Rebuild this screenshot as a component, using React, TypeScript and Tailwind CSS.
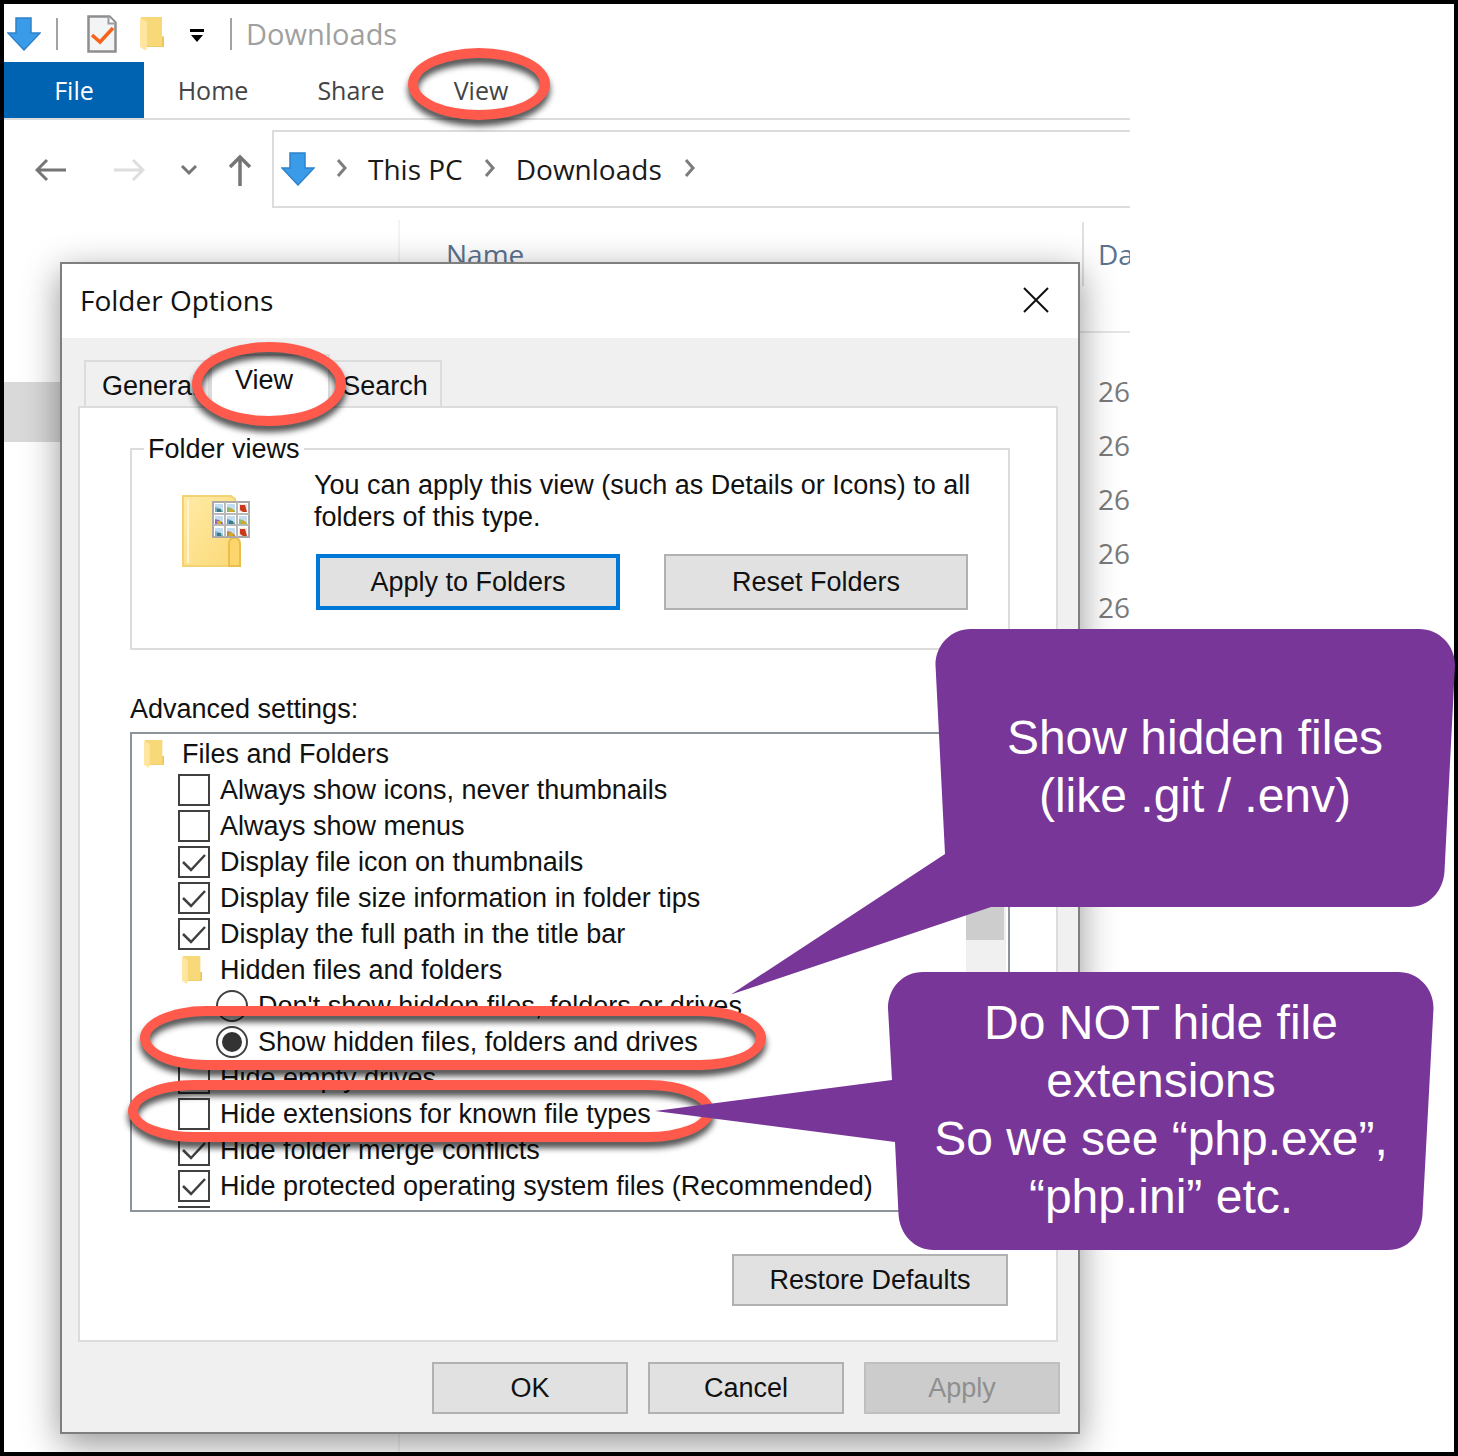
import React from "react";

const UI = "font-['Open_Sans','Noto_Sans',sans-serif]";
const DIALOG = "font-['Liberation_Sans',Arial,sans-serif]";

function DownArrow() {
  return (
    <svg width="34" height="34" viewBox="0 0 34 34" aria-hidden="true">
      <path d="M9 1h15v15h9L17 33 1 16h8z" fill="#3a9be9" stroke="#2f83c9" strokeWidth="1.5" />
    </svg>
  );
}

function FolderIcon({ className }: { className: string }) {
  return (
    <svg className={className} viewBox="0 0 24 35" preserveAspectRatio="none" aria-hidden="true">
      <path d="M1 0h21v20h2v11H3z" fill="#f7d97a" />
      <path d="M22 20h2v11H6v-1h16z" fill="#ecc85c" />
      <path d="M0 1l7 4v24l-1 6-6-4z" fill="#ffe6a0" />
    </svg>
  );
}

function PageCheckIcon() {
  return (
    <svg width="30" height="38" viewBox="0 0 30 38" aria-hidden="true">
      <path d="M1.500 1.500h21l6 6v29h-27z" fill="#f3f4f6" stroke="#8e8e8e" strokeWidth="2.500" />
      <path d="M21.500 1.500v7h7" fill="#fff" stroke="#9a9a9a" strokeWidth="2" />
      <path d="M5 20l8 7L26 13" fill="none" stroke="#f7631b" strokeWidth="3.500" />
    </svg>
  );
}

function Chevron() {
  return (
    <svg width="12" height="20" viewBox="0 0 12 20" aria-hidden="true" className="shrink-0">
      <path d="M2 1l7 8-7 8" fill="none" stroke="#7d7d7d" strokeWidth="3" />
    </svg>
  );
}

function FolderViewsIcon() {
  const tiles = ["#6fa8cf", "#86b86a", "#c9391d", "#8e6bb0", "#5f9fd0", "#8abf6d", "#7ab4dc", "#b98a3c", "#c9391d"];
  return (
    <svg width="70" height="74" viewBox="0 0 70 74" aria-hidden="true">
      <defs>
        <linearGradient id="fv" x1="0" y1="0" x2="1" y2="1">
          <stop offset="0" stopColor="#ffeaa6" />
          <stop offset="1" stopColor="#fbd977" />
        </linearGradient>
      </defs>
      <path d="M1 2h48l4 3v67H1z" fill="url(#fv)" stroke="#f3d273" strokeWidth="2" />
      <path d="M6 6v63" stroke="#fff3cd" strokeWidth="2" />
      <path d="M47 72V50q0-6 5.500-6t5.500 6v22z" fill="#fdd56d" stroke="#e8bf4c" strokeWidth="2" />
      <rect x="31" y="8" width="36" height="35" fill="#fff" stroke="#a9a9a9" strokeWidth="2" />
      <path d="M43 8v35M55 8v35M31 20h36M31 31h36" stroke="#b9b9b9" strokeWidth="2" />
      {tiles.map((c, i) => {
        const x = 33 + (i % 3) * 12;
        const y = 10 + Math.floor(i / 3) * 12;
        const red = c === "#c9391d";
        return (
          <g key={i}>
            <rect x={x} y={y} width="8" height="8" fill={red ? "#f3e4de" : "#c4dcf0"} />
            <path d={red ? `M${x + 1} ${y + 1}h5l2 7h-4l-3-2z` : `M${x} ${y + 3}l4 1 4 3v1h-8z`} fill={c} />
            {!red && <rect x={x + 2} y={y + 5} width="4" height="3" fill={i % 2 ? "#d9a62c" : "#3d7c74"} />}
          </g>
        );
      })}
    </svg>
  );
}

function Ring({ className }: { className: string }) {
  return (
    <span
      aria-hidden="true"
      className={`pointer-events-none absolute z-10 border-[10px] border-[#ff5a4b] drop-shadow-[0_6px_3px_rgba(0,0,0,0.7)] ${className}`}
    />
  );
}

type Item = { kind: "folder" | "check" | "radio"; level: 0 | 1 | 2; label: string; on?: boolean };

const items: Item[] = [
  { kind: "folder", level: 0, label: "Files and Folders" },
  { kind: "check", level: 1, label: "Always show icons, never thumbnails" },
  { kind: "check", level: 1, label: "Always show menus" },
  { kind: "check", level: 1, label: "Display file icon on thumbnails", on: true },
  { kind: "check", level: 1, label: "Display file size information in folder tips", on: true },
  { kind: "check", level: 1, label: "Display the full path in the title bar", on: true },
  { kind: "folder", level: 1, label: "Hidden files and folders" },
  { kind: "radio", level: 2, label: "Don't show hidden files, folders or drives" },
  { kind: "radio", level: 2, label: "Show hidden files, folders and drives", on: true },
  { kind: "check", level: 1, label: "Hide empty drives" },
  { kind: "check", level: 1, label: "Hide extensions for known file types" },
  { kind: "check", level: 1, label: "Hide folder merge conflicts", on: true },
  { kind: "check", level: 1, label: "Hide protected operating system files (Recommended)", on: true },
  { kind: "check", level: 1, label: "" },
];

const indent = ["pl-2", "pl-[46px]", "pl-[84px]"];

function SettingRow({ item }: { item: Item }) {
  const pad = indent[item.level];
  if (item.kind === "folder") {
    return (
      <div className={`flex h-9 shrink-0 items-center ${pad}`}>
        <span className="flex w-[42px] pl-1">
          <FolderIcon className="h-7 w-5" />
        </span>
        <span>{item.label}</span>
      </div>
    );
  }
  return (
    <label className={`flex h-9 shrink-0 items-center gap-[10px] ${pad}`}>
      <span className="relative flex size-8 shrink-0">
        {item.kind === "check" ? (
          <>
            <input
              type="checkbox"
              defaultChecked={item.on}
              aria-label={item.label || "More settings"}
              className="peer size-8 appearance-none border-2 border-[#404040] bg-white"
            />
            <svg className="pointer-events-none absolute inset-0 hidden peer-checked:block" viewBox="0 0 32 32" aria-hidden="true">
              <path d="M5 16l8 8L27 9" fill="none" stroke="#404040" strokeWidth="2.500" />
            </svg>
          </>
        ) : (
          <>
            <input
              type="radio"
              name="hidden-files"
              defaultChecked={item.on}
              className="peer size-8 appearance-none rounded-full border-2 border-[#404040] bg-white"
            />
            <span className="pointer-events-none absolute inset-[6px] hidden rounded-full bg-[#333] peer-checked:block" />
          </>
        )}
      </span>
      <span>{item.label}</span>
    </label>
  );
}

function PushButton({ children, className }: { children: React.ReactNode; className: string }) {
  return (
    <button type="button" className={`border-2 border-[#b1b1b1] bg-[#e1e1e1] ${className}`}>
      {children}
    </button>
  );
}

function Explorer() {
  return (
    <section className={`mr-[324px] flex flex-col overflow-hidden [grid-area:1/1] ${UI}`}>
      <header className="flex h-[58px] items-center pt-[2px]">
        <span className="ml-[3px] flex w-[49px]"><DownArrow /></span>
        <span className="h-8 w-[2px] bg-[#a3a3a3]" />
        <span className="ml-[29px] flex w-[53px]"><PageCheckIcon /></span>
        <FolderIcon className="h-[34px] w-6" />
        <svg width="16" height="14" viewBox="0 0 16 14" aria-hidden="true" className="mt-1 ml-[25px]">
          <path d="M1 0h14v3H1zM2 6h12l-6 7z" fill="#000" />
        </svg>
        <span className="ml-[25px] h-8 w-[2px] bg-[#a3a3a3]" />
        <h1 className="ml-[14px] text-[29px] leading-9 text-[#a0a0a0]">Downloads</h1>
      </header>
      <nav className="flex h-[58px] border-b-2 border-[#dcdcdc] text-[25px] leading-9 text-[#444]">
        <button type="button" className="w-[140px] bg-[#0063b1] text-white">File</button>
        <button type="button" className="w-[138px]">Home</button>
        <button type="button" className="w-[138px]">Share</button>
        <button type="button" className="relative w-[122px]">
          View
          <Ring className="-top-[14px] -left-3 h-[72px] w-[142px] rounded-[50%]" />
        </button>
      </nav>
      <div className="mt-[10px] flex h-[78px] items-center text-[28px] leading-9 text-[#1a1a1a]">
        <div className="flex w-[268px] shrink-0 items-center pt-[2px]">
          <button type="button" aria-label="Back" className="ml-[31px]">
            <svg width="32" height="24" viewBox="0 0 32 24"><path d="M31 12H3M12 2L2 12l10 10" fill="none" stroke="#757575" strokeWidth="3" /></svg>
          </button>
          <button type="button" aria-label="Forward" className="ml-[46px]">
            <svg width="32" height="24" viewBox="0 0 32 24"><path d="M1 12h28M20 2l10 10-10 10" fill="none" stroke="#dedede" strokeWidth="3" /></svg>
          </button>
          <button type="button" aria-label="Recent locations" className="ml-[35px]">
            <svg width="18" height="12" viewBox="0 0 18 12"><path d="M2 2l7 7 7-7" fill="none" stroke="#757575" strokeWidth="3" /></svg>
          </button>
          <button type="button" aria-label="Up" className="ml-[30px]">
            <svg width="24" height="32" viewBox="0 0 24 32"><path d="M12 32V3M2 13L12 3l10 10" fill="none" stroke="#757575" strokeWidth="3.500" /></svg>
          </button>
        </div>
        <div className="flex h-full flex-1 items-center border-y-2 border-l-2 border-[#dcdcdc] pl-[7px]">
          <DownArrow />
          <span className="ml-[21px] flex"><Chevron /></span>
          <a href="#this-pc" className="ml-5">This PC</a>
          <span className="ml-[21px] flex"><Chevron /></span>
          <a href="#downloads" className="ml-5">Downloads</a>
          <span className="ml-[22px] flex"><Chevron /></span>
        </div>
      </div>
      <div className="flex flex-1 leading-9">
        <div className="mt-3 w-[396px] shrink-0 border-r-2 border-[#f3f3f3] pt-[162px]">
          <div className="h-[60px] bg-[#d9d9d9]" />
        </div>
        <table className="w-full table-fixed self-start border-collapse text-left text-[28px]">
          <thead>
            <tr className="h-[124px] border-b-2 border-[#e5e5e5] align-top text-[#5b7290]">
              <th className="pt-[14px] font-normal">
                <div className="flex h-16 items-center border-r-2 border-[#e0e0e0] pl-[46px]">Name</div>
              </th>
              <th className="w-[46px] overflow-hidden pt-[14px] font-normal">
                <div className="flex h-16 items-center pl-[14px]">Da</div>
              </th>
            </tr>
          </thead>
          <tbody className="text-[#7a7a7a]">
            <tr className="h-8" aria-hidden="true" />
            {[0, 1, 2, 3, 4].map((n) => (
              <tr key={n} className="h-[54px]">
                <td />
                <td className="pl-[14px]">26</td>
              </tr>
            ))}
          </tbody>
        </table>
      </div>
    </section>
  );
}

function FolderOptions() {
  return (
    <section
      role="dialog"
      aria-labelledby="dialog-title"
      className={`relative mt-[258px] mr-[374px] mb-[18px] ml-14 flex flex-col border-2 border-[#7f7f7f] bg-[#f0f0f0] text-[27px] leading-8 text-[#111] shadow-[0_10px_34px_rgba(0,0,0,0.42)] [grid-area:1/1] ${DIALOG}`}
    >
      <header className="flex h-[74px] items-center justify-between bg-white pr-[28px] pb-[2px] pl-[18px]">
        <h2 id="dialog-title" className={`text-[28px] ${UI}`}>Folder Options</h2>
        <button type="button" aria-label="Close">
          <svg width="28" height="28" viewBox="0 0 28 28"><path d="M2 2l24 24M26 2L2 26" stroke="#111" strokeWidth="2" /></svg>
        </button>
      </header>

      <div role="tablist" className="relative mt-4 ml-[22px] flex h-[52px] items-end">
        <button type="button" role="tab" className="h-[46px] w-[126px] border-2 border-b-0 border-[#dcdcdc] pt-1 pl-4 text-left">General</button>
        <button type="button" role="tab" aria-selected="true" className="relative z-10 -mb-[2px] h-[54px] w-[120px] border-2 border-b-0 border-[#dcdcdc] bg-white pr-3 pb-1">View</button>
        <button type="button" role="tab" className="h-[46px] w-[112px] border-2 border-l-0 border-b-0 border-[#dcdcdc] pt-1">Search</button>
        <Ring className="-top-3 left-[108px] h-[84px] w-[154px] rounded-[50%]" />
      </div>

      <div role="tabpanel" className="mr-5 ml-4 flex flex-col border-2 border-[#dcdcdc] bg-white pt-[25px] pr-[46px] pb-[34px] pl-[50px]">
        <fieldset className="h-[217px] border-2 border-[#dcdcdc]">
          <legend className="ml-3 px-1">Folder views</legend>
          <div className="flex pl-[50px]">
            <div className="w-[132px] shrink-0 pt-[29px]"><FolderViewsIcon /></div>
            <div>
              <p className="mt-1">
                You can apply this view (such as Details or Icons) to all
                <br />
                folders of this type.
              </p>
              <div className="mt-[21px] flex gap-11 pl-[2px]">
                <button type="button" className="h-14 w-[304px] border-4 border-[#0078d7] bg-[#e1e1e1]">Apply to Folders</button>
                <PushButton className="h-14 w-[304px]">Reset Folders</PushButton>
              </div>
            </div>
          </div>
        </fieldset>

        <h3 className="mt-[43px]">Advanced settings:</h3>
        <div className="relative mt-[7px]">
          <div className="flex h-[480px] justify-between overflow-hidden border-2 border-[#8c939b] pr-[2px]">
            <div className="flex h-[474px] flex-col overflow-hidden pt-[2px]">
              {items.map((item, i) => (
                <SettingRow key={i} item={item} />
              ))}
            </div>
            <div className="w-10 bg-[#f0f0f0]">
              <div className="mr-[2px] h-[206px] bg-[#cdcdcd]" />
            </div>
          </div>
          <Ring className="top-[274px] left-[10px] h-16 w-[626px] rounded-[66px/32px]" />
          <Ring className="top-[348px] -left-[2px] h-[62px] w-[586px] rounded-[66px/31px]" />
        </div>
        <PushButton className="mt-[42px] mr-[2px] h-[52px] w-[276px] self-end">Restore Defaults</PushButton>
      </div>

      <footer className="flex justify-end gap-5 pt-5 pr-[18px] pb-[18px]">
        <PushButton className="h-[52px] w-[196px]">OK</PushButton>
        <PushButton className="h-[52px] w-[196px]">Cancel</PushButton>
        <button type="button" disabled className="h-[52px] w-[196px] border-2 border-[#bfbfbf] bg-[#cccccc] text-[#8f8f8f]">Apply</button>
      </footer>
    </section>
  );
}

export default function App() {
  return (
    <main className="relative grid min-h-screen grid-cols-1 border-4 border-black bg-white">
      <Explorer />
      <FolderOptions />

      <aside className={`absolute top-[625px] left-[727px] z-20 h-[366px] w-[724px] text-center text-[48px] leading-[58px] text-white ${DIALOG}`}>
        <svg className="absolute inset-0" width="724" height="366" viewBox="731 629 724 366" aria-hidden="true">
          <path
            d="M935.500 665C935.500 645 951 629 971 629H1419C1439 629 1455 645 1455 665L1444.500 871C1443.500 891 1429 907 1409 907H991L731 994.500 945 854Z"
            fill="#783698"
          />
        </svg>
        <p className="relative ml-[204px] flex h-[276px] flex-col justify-center">
          <span>Show hidden files</span>
          <span>(like .git / .env)</span>
        </p>
      </aside>

      <aside className={`absolute top-[968px] left-[651px] z-20 h-[278px] w-[779px] text-center text-[48px] leading-[58px] text-white ${DIALOG}`}>
        <svg className="absolute inset-0" width="779" height="278" viewBox="655 972 779 278" aria-hidden="true">
          <path
            d="M888 1008C888 988 903 972 923 972H1398C1418 972 1433.500 988 1433.500 1008L1422.500 1214C1421.500 1234 1408 1250 1388 1250H934C914 1250 899.500 1234 898.500 1214L895 1142 655 1111 892 1080Z"
            fill="#783698"
          />
        </svg>
        <p className="relative ml-[233px] flex h-[276px] flex-col justify-center">
          <span>Do NOT hide file</span>
          <span>extensions</span>
          <span>So we see “php.exe”,</span>
          <span>“php.ini” etc.</span>
        </p>
      </aside>
    </main>
  );
}
